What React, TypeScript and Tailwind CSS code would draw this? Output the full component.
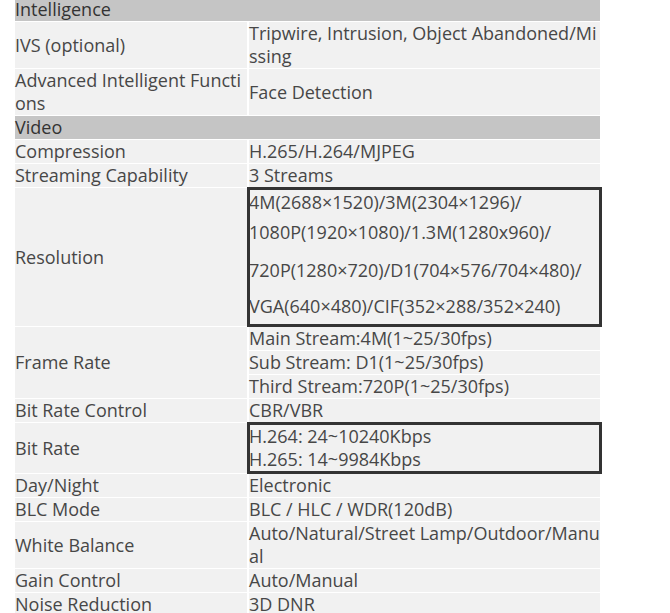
import React from "react";

const L = "bg-[#f1f1f1] text-[#474747] leading-[23px] flex items-center min-h-[23px] break-all";
const R = "bg-[#f1f1f1] text-[#474747] leading-[23px] min-h-[23px] break-all";
const H = "col-span-2 bg-[#c5c5c5] text-[#333] leading-[23px] h-[23px]";

function Row({ k, v }: { k: string; v: string }) {
  return (
    <>
      <div className={L}>{k}</div>
      <div className={`${R} flex items-center`}>{v}</div>
    </>
  );
}

export default function App() {
  return (
    <div
      className="bg-white w-[670px] h-[613px] overflow-hidden"
      style={{ fontFamily: '"Open Sans", "Liberation Sans", sans-serif' }}
    >
      <div className="ml-[15px] mt-[-2px] w-[585px] grid grid-cols-[232px_351px] gap-x-[2px] gap-y-[1px] text-[18px]">
        <div className={H}>Intelligence</div>
        <Row k="IVS (optional)" v="Tripwire, Intrusion, Object Abandoned/Missing" />
        <Row k="Advanced Intelligent Functions" v="Face Detection" />
        <div className={H}>Video</div>
        <Row k="Compression" v="H.265/H.264/MJPEG" />
        <Row k="Streaming Capability" v="3 Streams" />
        <div className={`${L} h-[138px]`}>Resolution</div>
        <div className={`${R} relative h-[138px] pt-[3px]`}>
          <div className="absolute -left-[2px] -right-[2px] -top-[1px] -bottom-[1px] border-[3px] border-[#333]" />
          <div>4M(2688×1520)/3M(2304×1296)/</div>
          <div className="mt-[7px]">1080P(1920×1080)/1.3M(1280x960)/</div>
          <div className="mt-[15px]">720P(1280×720)/D1(704×576/704×480)/</div>
          <div className="mt-[13px]">VGA(640×480)/CIF(352×288/352×240)</div>
        </div>
        <div className={`${L} row-span-3`}>Frame Rate</div>
        <div className={R}>Main Stream:4M(1~25/30fps)</div>
        <div className={R}>Sub Stream: D1(1~25/30fps)</div>
        <div className={R}>Third Stream:720P(1~25/30fps)</div>
        <Row k="Bit Rate Control" v="CBR/VBR" />
        <div className={`${L} h-[50px]`}>Bit Rate</div>
        <div className={`${R} relative h-[50px] pt-[2px]`}>
          <div className="absolute -left-[2px] -right-[2px] -top-[1px] -bottom-[1px] border-[3px] border-[#333]" />
          <div>H.264: 24~10240Kbps</div>
          <div>H.265: 14~9984Kbps</div>
        </div>
        <Row k="Day/Night" v="Electronic" />
        <Row k="BLC Mode" v="BLC / HLC / WDR(120dB)" />
        <Row k="White Balance" v="Auto/Natural/Street Lamp/Outdoor/Manual" />
        <Row k="Gain Control" v="Auto/Manual" />
        <Row k="Noise Reduction" v="3D DNR" />
      </div>
    </div>
  );
}
